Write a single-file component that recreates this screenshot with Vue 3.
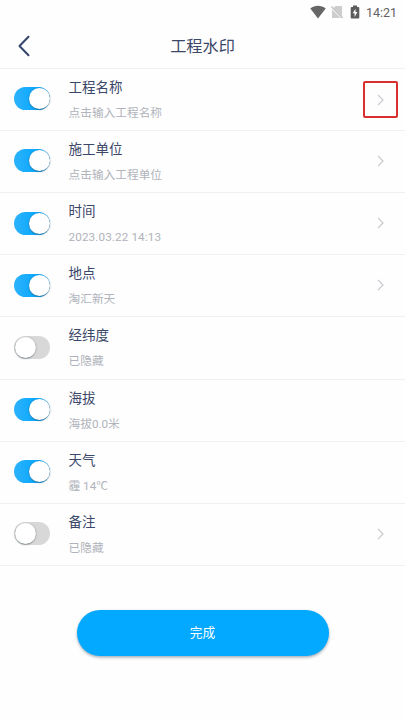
<script setup>
import { ref } from 'vue'

const rows = ref([
  { title: '工程名称', value: '点击输入工程名称', on: true, arrow: true, marked: true },
  { title: '施工单位', value: '点击输入工程单位', on: true, arrow: true },
  { title: '时间', value: '2023.03.22 14:13', on: true, arrow: true, numeric: true },
  { title: '地点', value: '淘汇新天', on: true, arrow: true },
  { title: '经纬度', value: '已隐藏', on: false, arrow: false },
  { title: '海拔', value: '海拔0.0米', on: true, arrow: false },
  { title: '天气', value: '霾 14℃', on: true, arrow: false },
  { title: '备注', value: '已隐藏', on: false, arrow: true },
])
</script>

<template>
  <main class="screen">
    <div class="status">
      <svg class="wifi" viewBox="0 0 16 14"><path d="M0.3 3.5C4.8-.3 11.2-.3 15.7 3.5L8 13.5Z" fill="#666" /></svg>
      <svg class="sim" viewBox="0 0 12 14">
        <path d="M4.5 1H11V11.2L2.7 3Z M1 4.2L9.7 13H1Z" fill="#cdcdcd" />
        <path d="M.5 1.5L11.5 13" stroke="#bbb" stroke-width="1.1" />
      </svg>
      <svg class="battery" viewBox="0 0 10 14">
        <path d="M3 0.5H7V2H8.2Q9.3 2 9.3 3V12.5Q9.3 13.5 8.2 13.5H1.8Q.7 13.5 .7 12.5V3Q.7 2 1.8 2H3Z" fill="#5c5c5c" />
        <path d="M5.5 3.7L2.7 8.3H4.6V12L7.4 7.1H5.5Z" fill="#fff" />
      </svg>
      <span class="clock">14:21</span>
    </div>
    <header class="header">
      <svg class="back" viewBox="0 0 12 22"><path d="M10.5 1.7L1.5 11L10.5 20.3" /></svg>
      <h1>工程水印</h1>
    </header>
    <ul class="list">
      <li v-for="row in rows" :key="row.title" class="row">
        <button class="switch" :class="{ on: row.on }" @click="row.on = !row.on"><i class="knob"></i></button>
        <div class="text">
          <div class="title">{{ row.title }}</div>
          <div class="value" :class="{ numeric: row.numeric }">{{ row.value }}</div>
        </div>
        <div v-if="row.arrow" class="arrow" :class="{ marked: row.marked }">
          <svg viewBox="0 0 7 12"><path d="M1 .8L6 6L1 11.2" /></svg>
        </div>
      </li>
    </ul>
    <button class="done">完成</button>
  </main>
</template>

<style>
body {
  margin: 0;
  background: #fefefe;
}
</style>

<style scoped>
.screen {
  display: flex;
  flex-direction: column;
  width: 405px;
  height: 720px;
  overflow: hidden;
  background: #fefefe;
  font-family: Roboto, "Noto Sans CJK SC", sans-serif;
}
svg {
  display: block;
  fill: none;
}
.status {
  display: flex;
  align-items: center;
  justify-content: flex-end;
  height: 24px;
  padding-right: 8px;
  box-sizing: border-box;
}
.wifi { width: 16px; height: 14px; margin-right: 5px; }
.sim { width: 12px; height: 14px; margin-right: 7px; }
.battery { width: 10px; height: 14px; margin-right: 6px; }
.clock {
  width: 31px;
  padding-top: 1px;
  color: #626262;
  font-size: 12.5px;
  line-height: 23px;
  white-space: nowrap;
}
.header {
  display: grid;
  grid-template-columns: 40px 1fr 40px;
  align-items: center;
  height: 44px;
}
.back {
  width: 12px;
  height: 22px;
  margin-left: 18px;
}
.back path {
  stroke: #35456d;
  stroke-width: 2;
  stroke-linecap: round;
  stroke-linejoin: round;
}
h1 {
  margin: 0;
  padding-top: 2px;
  color: #3c4869;
  font-size: 16.2px;
  font-weight: 400;
  line-height: 24px;
  text-align: center;
}
.list {
  margin: 0;
  padding: 0;
  list-style: none;
  border-top: 1px solid #f1f1f3;
}
.row {
  display: flex;
  align-items: center;
  height: 62.12px;
  padding: 0 7px 0 14px;
  box-sizing: border-box;
  border-bottom: 1px solid #f0f0f3;
}
.switch {
  display: flex;
  align-items: center;
  flex: none;
  width: 36px;
  height: 23px;
  margin-bottom: 1.4px;
  padding: 0 0 0 0.5px;
  border: 0;
  border-radius: 12px;
  background: #d9d8d8;
}
.switch.on {
  justify-content: flex-end;
  background: linear-gradient(90deg, #2cb2fb, #0ba8fe 60%);
}
.knob {
  width: 21px;
  height: 21px;
  border-radius: 50%;
  background: #fff;
  box-shadow: 0 0.5px 1.5px rgba(40, 60, 70, 0.7);
}
.text {
  flex: 1;
  margin-left: 18.5px;
  padding-top: 1px;
}
.title {
  color: #3a4769;
  font-size: 13.5px;
  line-height: 20px;
}
.value {
  margin-top: 7px;
  color: #b0b3bb;
  font-size: 11.7px;
  line-height: 19px;
}
.value.numeric {
  letter-spacing: 0.12px;
}
.arrow {
  display: flex;
  align-items: center;
  justify-content: center;
  width: 35px;
  height: 37px;
  box-sizing: border-box;
}
.arrow:not(.marked) {
  margin-bottom: 1px;
}
.arrow.marked {
  border: 2px solid #d9302f;
  border-radius: 2px;
}
.arrow svg {
  width: 7px;
  height: 12px;
}
.arrow path {
  stroke: #c6c8cc;
  stroke-width: 1.2;
}
.done {
  align-self: center;
  width: 252px;
  height: 46px;
  margin-top: 44px;
  padding: 0;
  border: 0;
  border-radius: 23px;
  background: #02a9ff;
  box-shadow: 0 1.5px 3px rgba(50, 70, 90, 0.45);
  color: #fff;
  font-family: inherit;
  font-size: 12.7px;
  line-height: 46px;
}
</style>
